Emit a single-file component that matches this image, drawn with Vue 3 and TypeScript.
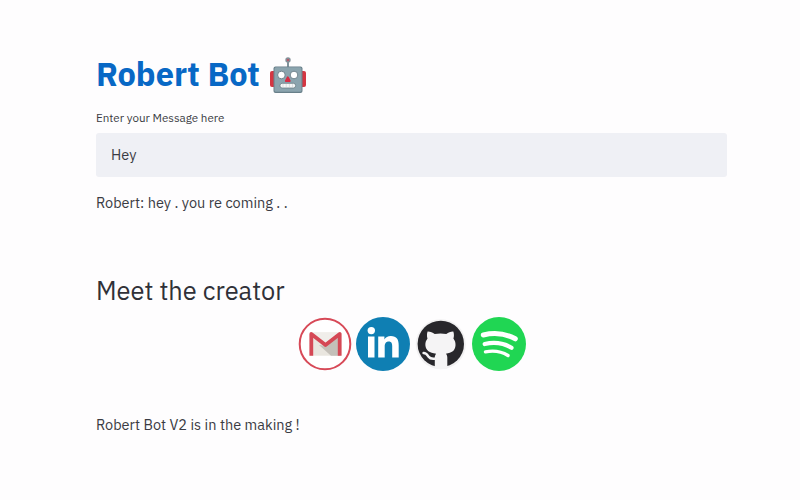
<script setup lang="ts">
import { ref } from 'vue'

const message = ref<string>('Hey')
const reply = 'hey . you re coming . .'
</script>

<template>
  <main class="page">
    <h1 class="title">
      <span class="title-text">Robert Bot</span>
      <svg class="robot" viewBox="0 0 38 38" aria-hidden="true">
        <path d="M19 5v6" stroke="#7f939b" stroke-width="2" />
        <circle cx="19" cy="4" r="2.7" fill="#84939b" />
        <circle cx="19" cy="4" r="1.3" fill="#b45c6c" />
        <rect x="1" y="15" width="7" height="16" rx="2" fill="#d43642" />
        <rect x="30" y="15" width="7" height="16" rx="2" fill="#d43642" />
        <rect x="4.5" y="10.5" width="29" height="26.5" rx="2" fill="#687f89" />
        <rect x="5.5" y="11.3" width="27" height="24.4" rx="1.5" fill="#8ba4ae" />
        <circle cx="12.4" cy="19" r="3.8" fill="#fff" stroke="#687b84" stroke-width=".9" />
        <circle cx="25" cy="19" r="3.8" fill="#fff" stroke="#687b84" stroke-width=".9" />
        <path d="M18.8 21.2l2 3.8h-4z" fill="#e02440" stroke="#d82b42" stroke-width="1.8" stroke-linejoin="round" />
        <rect x="11" y="27.3" width="15.6" height="4.7" rx="2.1" fill="#f5f7f7" stroke="#6b7d85" stroke-width=".8" />
        <path d="M14 28v3.2m3.2-3.2v3.2m3.2-3.2v3.2m3.2-3.2v3.2" stroke="#c9cfd2" stroke-width=".6" />
      </svg>
    </h1>

    <label class="label" for="message"><span>Enter your Message here</span></label>
    <input id="message" v-model="message" class="field" type="text" />
    <p class="reply">Robert: {{ reply }}</p>

    <h2 class="subtitle">Meet the creator</h2>
    <nav class="links">
      <svg viewBox="0 0 54 54">
        <circle cx="27" cy="27" r="25.3" fill="#fff" stroke="#d74957" stroke-width="2" />
        <path d="M12 15.5h31v23.2H12z" fill="#e9e6df" />
        <path d="M27.5 29L42 16v22.7H33L21 28z" fill="#c4c0b9" />
        <path d="M14 15.5l13.5 10.5L41 15.5" fill="#f0eeea" />
        <path d="M13.3 38.7V17l14.2 11L41.7 17v21.7" fill="none" stroke="#d54855" stroke-width="3.8" stroke-linejoin="round" />
      </svg>
      <svg viewBox="0 0 54 54">
        <circle cx="27" cy="27" r="27" fill="#0f7fb3" />
        <circle cx="15.3" cy="13.6" r="3.7" fill="#fff" />
        <path d="M12 19.6h6.5v20.8H12zM22.2 19.6h6.2v2.8c1.2-2 3.4-3.3 6.4-3.3 6 0 7.9 3.6 7.9 9.2v12.1h-6.5V29.5c0-3-.5-5.1-3.4-5.1-3 0-4.1 2.2-4.1 5.1v10.9h-6.5z" fill="#fff" />
      </svg>
      <svg viewBox="0 0 54 54">
        <circle cx="26.8" cy="27.2" r="25" fill="#f1f0f1" />
        <circle cx="26.8" cy="26.9" r="23.2" fill="#28272b" />
        <path d="M13.6 14.4c2.6-.1 5 1.1 7.1 2.5q5.8-1 11.6 0c2.1-1.4 4.4-2.6 7-2.5.9 2.5.8 5 .1 7.1 1.7 2.2 2.3 4.4 2.1 7.1-.4 5.2-3.6 7.3-9.6 8.1 1 1 1.4 2.3 1.4 3.9V52H20.8V40.6c0-1.6.5-2.9 1.4-3.9-6.8-.7-10.3-3-10.8-8.1-.2-2.7.4-4.9 2.1-7.1-.7-2.1-.8-4.6.1-7.1z" fill="#f5f4f5" />
        <path d="M9.6 36c3.2.1 3.7 2 5 3.8 1.6 2.2 4 2.4 7.4 1.7" fill="none" stroke="#f5f4f5" stroke-width="2.5" stroke-linecap="round" />
      </svg>
      <svg viewBox="0 0 54 54">
        <circle cx="27" cy="27" r="27" fill="#20d653" />
        <g fill="none" stroke="#fff" stroke-linecap="round">
          <path d="M11.3 18c11.4-2.7 22.5-1.3 32 3.8" stroke-width="5" />
          <path d="M12.7 27c9.6-2.2 19-.9 26.8 3.8" stroke-width="4.2" />
          <path d="M13.5 34.9c8-1.6 15.8-.5 22.5 3.6" stroke-width="3.4" />
        </g>
      </svg>
    </nav>
    <p class="footer">Robert Bot V2 is in the making !</p>
  </main>
</template>

<style>
body {
  background: #fefdfe;
}
</style>

<style scoped>
.page {
  box-sizing: border-box;
  width: 727px;
  height: 500px;
  padding: 56px 0 0 96px;
  color: #3a3b43;
  font-family: "IBM Plex Sans", Roboto, "Liberation Sans", sans-serif;
  font-size: 14.5px;
}
h1, h2, p {
  margin: 0;
}
.title {
  display: flex;
  align-items: flex-start;
  gap: 9px;
  height: 54px;
  color: #0868c5;
  font-size: 32.6px;
  line-height: 37px;
}
.title-text {
  width: 164px;
  white-space: nowrap;
}
.robot {
  width: 38px;
  height: 38px;
}
.label {
  display: block;
  height: 23px;
  font-size: 11.6px;
  line-height: 16px;
}
.field {
  display: block;
  box-sizing: border-box;
  width: 631px;
  height: 44px;
  padding: 0 15px 2px;
  border: 0;
  border-radius: 3px;
  outline: 0;
  background: #eff0f5;
  color: inherit;
  font: inherit;
}
.reply {
  margin-top: 16px;
  line-height: 20px;
}
.subtitle {
  margin-top: 62px;
  color: #303138;
  font-size: 25.4px;
  font-weight: 400;
  line-height: 32px;
}
.links {
  display: flex;
  justify-content: center;
  gap: 4px;
  margin-top: 10px;
}
.links svg {
  width: 54px;
  height: 54px;
}
.footer {
  margin-top: 44px;
  line-height: 20px;
}
</style>
